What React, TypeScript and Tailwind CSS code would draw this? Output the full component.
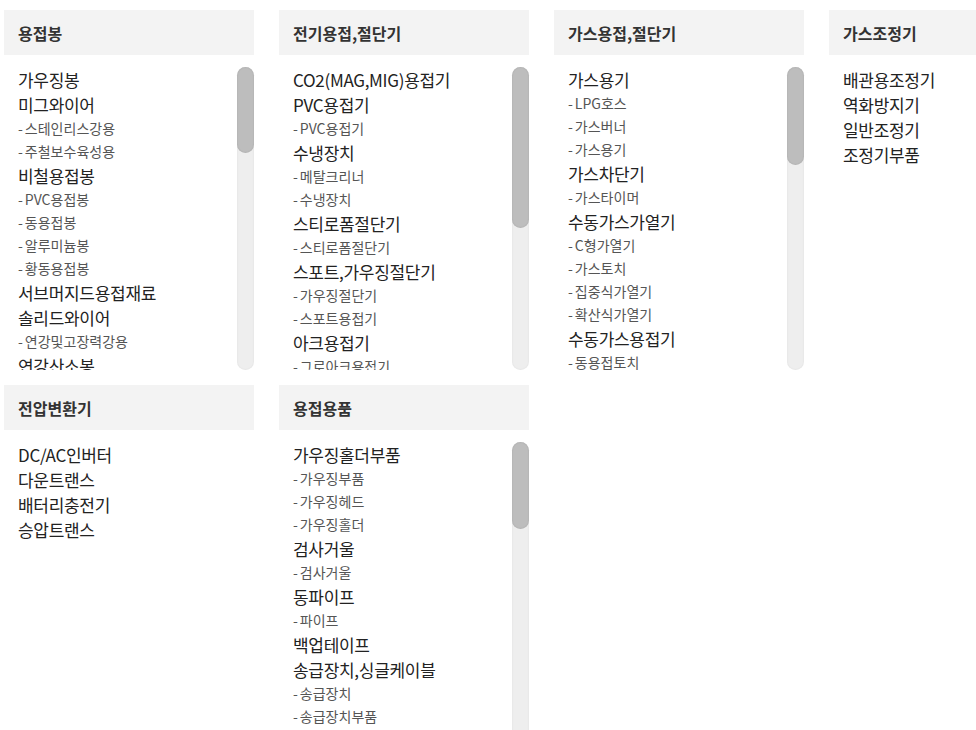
type Category = {
  title: string;
  items: string[];
  thumb?: number; // scrollbar thumb height in px, when the list scrolls
};

// "-" prefix marks a sub item
const rows: Category[][] = [
  [
    {
      title: "용접봉",
      thumb: 86,
      items: [
        "가우징봉",
        "미그와이어",
        "-스테인리스강용",
        "-주철보수육성용",
        "비철용접봉",
        "-PVC용접봉",
        "-동용접봉",
        "-알루미늄봉",
        "-황동용접봉",
        "서브머지드용접재료",
        "솔리드와이어",
        "-연강및고장력강용",
        "연강산소봉",
      ],
    },
    {
      title: "전기용접,절단기",
      thumb: 161,
      items: [
        "CO2(MAG,MIG)용접기",
        "PVC용접기",
        "-PVC용접기",
        "수냉장치",
        "-메탈크리너",
        "-수냉장치",
        "스티로폼절단기",
        "-스티로폼절단기",
        "스포트,가우징절단기",
        "-가우징절단기",
        "-스포트용접기",
        "아크용접기",
        "-그로아크용접기",
      ],
    },
    {
      title: "가스용접,절단기",
      thumb: 98,
      items: [
        "가스용기",
        "-LPG호스",
        "-가스버너",
        "-가스용기",
        "가스차단기",
        "-가스타이머",
        "수동가스가열기",
        "-C형가열기",
        "-가스토치",
        "-집중식가열기",
        "-확산식가열기",
        "수동가스용접기",
        "-동용접토치",
      ],
    },
    {
      title: "가스조정기",
      items: ["배관용조정기", "역화방지기", "일반조정기", "조정기부품"],
    },
  ],
  [
    {
      title: "전압변환기",
      items: ["DC/AC인버터", "다운트랜스", "배터리충전기", "승압트랜스"],
    },
    {
      title: "용접용품",
      thumb: 87,
      items: [
        "가우징홀더부품",
        "-가우징부품",
        "-가우징헤드",
        "-가우징홀더",
        "검사거울",
        "-검사거울",
        "동파이프",
        "-파이프",
        "백업테이프",
        "송급장치,싱글케이블",
        "-송급장치",
        "-송급장치부품",
      ],
    },
  ],
];

function CategoryBox({ category }: { category: Category }) {
  return (
    <section className="pb-[15px]">
      <h2 className="flex h-[45px] items-center bg-[#f3f3f3] px-[14px] text-[16px] font-bold text-[#333]">
        {category.title}
      </h2>
      <div className="mt-[12px] flex h-[303px]">
        <ul className="min-w-0 flex-1 overflow-hidden pl-[14px]">
          {category.items.map((item, i) =>
            item.startsWith("-") ? (
              <li
                key={i}
                className="whitespace-nowrap text-[14px] leading-[23px] text-[#555]"
              >
                <span className="mr-[2px]">-</span>
                {item.slice(1)}
              </li>
            ) : (
              <li
                key={i}
                className="whitespace-nowrap text-[17px] leading-[25px] tracking-[-0.3px] text-[#222]"
              >
                {item}
              </li>
            )
          )}
        </ul>
        {category.thumb && (
          <div className="w-[17px] shrink-0 rounded-full bg-[#eeeeee] shadow-[inset_0_0_2px_rgba(0,0,0,0.08)]">
            <div
              className="rounded-full bg-[#bdbdbd] shadow-[inset_0_0_2px_rgba(0,0,0,0.12)]"
              style={{ height: category.thumb }}
            />
          </div>
        )}
      </div>
    </section>
  );
}

export default function App() {
  return (
    <div className="h-[730px] w-[976px] overflow-hidden bg-white font-['Noto_Sans_CJK_KR','Noto_Sans',sans-serif]">
      <div className="grid w-max grid-cols-[repeat(4,250px)] gap-x-[25px] pl-[4px] pt-[10px]">
        {rows.map((row) =>
          [0, 1, 2, 3].map((col) =>
            row[col] ? (
              <CategoryBox key={row[col].title} category={row[col]} />
            ) : (
              <div key={`${row[0].title}-${col}`} />
            )
          )
        )}
      </div>
    </div>
  );
}
